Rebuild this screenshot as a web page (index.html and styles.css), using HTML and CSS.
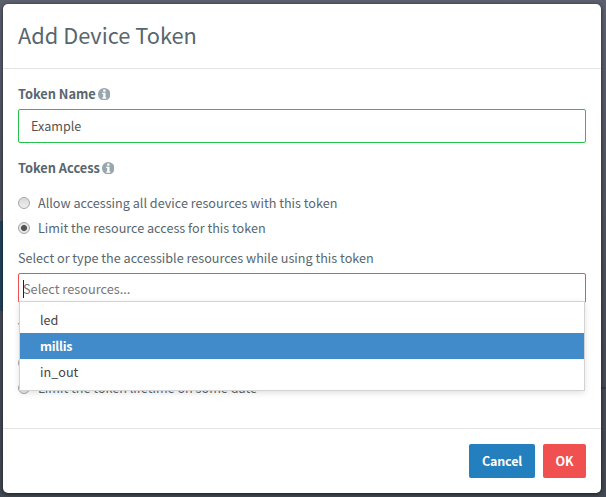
FILE: index.html
```html
<!DOCTYPE html>
<html lang="en">
<head>
<meta charset="utf-8">
<title>Add Device Token</title>
<link rel="stylesheet" href="styles.css">
</head>
<body>
<main class="modal">
  <header class="modal-header"><h1>Add Device Token</h1></header>
  <section class="modal-body">
    <div class="label">Token Name
      <svg class="info" viewBox="0 0 12 12"><circle cx="6" cy="6" r="6"/><path d="M5 1.5h2.2v2H5zM4 4.5h3.2V9H8v1.3H4V9h1V5.8H4z"/></svg>
    </div>
    <div class="input valid">Example</div>
    <div class="label access">Token Access
      <svg class="info" viewBox="0 0 12 12"><circle cx="6" cy="6" r="6"/><path d="M5 1.5h2.2v2H5zM4 4.5h3.2V9H8v1.3H4V9h1V5.8H4z"/></svg>
    </div>
    <div class="option"><i class="radio"></i>Allow accessing all device resources with this token</div>
    <div class="option"><i class="radio checked"></i>Limit the resource access for this token</div>
    <div class="hint">Select or type the accessible resources while using this token</div>
    <div class="select">
      <div class="input invalid"><i class="caret"></i>Select resources...</div>
      <ul class="menu">
        <li>led</li>
        <li class="active">millis</li>
        <li>in_out</li>
      </ul>
    </div>
    <div class="label expiry">Token Expiration</div>
    <div class="option"><i class="radio"></i>Token never expires</div>
    <div class="option"><i class="radio"></i>Limit the token lifetime on some date</div>
  </section>
  <footer class="modal-footer">
    <button class="btn cancel">Cancel</button>
    <button class="btn ok">OK</button>
  </footer>
</main>
</body>
</html>
```

FILE: styles.css
```css
* { box-sizing: border-box; }
body {
  margin: 0;
  height: 497px;
  padding: 4px 5px 4px 3px;
  overflow: hidden;
  background:
    linear-gradient(#23445b, #23445b) 0 221px / 3px 90px no-repeat,
    linear-gradient(#38384f, #38384f) 100% 387px / 6px 2px no-repeat,
    linear-gradient(#5d606f, #494c5a 60%, #434953);
  font-family: "Noto Sans CJK SC", "Noto Sans", sans-serif;
  font-size: 12.63px;
  line-height: 20px;
  color: #58666e;
}
.modal {
  height: 489px;
  background: #fff;
  border-radius: 5px;
  box-shadow: 0 1px 4px rgba(0, 0, 0, .65);
  display: flex;
  flex-direction: column;
}
.modal-header {
  height: 65px;
  padding: 15px;
  border-bottom: 1px solid #e5e5e5;
}
h1 { margin: 0; font-size: 21.8px; line-height: 31px; font-weight: 400; }
.modal-body { height: 359px; padding: 15px; }
.label { display: flex; align-items: center; gap: 2px; height: 20px; font-size: 12.8px; font-weight: 700; }
.info { width: 12.5px; height: 12.5px; fill: #98a6ad; }
.info path { fill: #fff; }
.input {
  height: 34px;
  border: 1px solid #27c24c;
  border-radius: 2px;
  padding: 6px 12px;
  color: #555;
}
.valid { margin-top: 5px; }
.access { margin: 15px 0 15px; }
.option { display: flex; align-items: center; height: 20px; margin-bottom: 5px; }
.radio {
  width: 12px;
  height: 12px;
  margin-right: 8px;
  border: 1px solid #a6a6a6;
  border-radius: 50%;
  background: linear-gradient(#d9d9d9, #eee);
}
.checked { background: radial-gradient(circle, #555 0 2.6px, #e5e5e5 3.4px); }
.hint { margin: 10px 0 5px; }
.select { position: relative; height: 30px; }
.invalid {
  height: 30px;
  border-color: #f05050;
  padding: 5px 4px;
  font-size: 12.75px;
  color: #777;
  position: relative;
}
.caret { position: absolute; left: 4px; top: 6px; width: 1px; height: 18px; background: #222; }
.menu {
  position: absolute;
  z-index: 1;
  left: 1px;
  right: 1px;
  top: 28px;
  height: 90px;
  margin: 0;
  padding: 5px 0;
  list-style: none;
  background: #fff;
  border: 1px solid #d3d3d3;
  box-shadow: 0 2px 6px rgba(0, 0, 0, .12);
  color: #444;
}
.menu li { height: 26px; padding: 3px 20px; }
.menu .active { background: #428bca; color: #fff; font-size: 12.5px; font-weight: 700; letter-spacing: -.25px; }
.expiry { margin: 15px 0 15px; }
.modal-footer {
  height: 65px;
  padding: 15px;
  border-top: 1px solid #e5e5e5;
  display: flex;
  justify-content: flex-end;
  gap: 8px;
}
.btn {
  height: 34px;
  padding: 0;
  border: 0;
  border-radius: 2px;
  color: #fff;
  font: 700 12.5px/34px "Noto Sans CJK SC", "Noto Sans", sans-serif;
  letter-spacing: -.15px;
}
.cancel { width: 66px; background: #237fbd; }
.ok { width: 43px; background: #f05050; }
```
